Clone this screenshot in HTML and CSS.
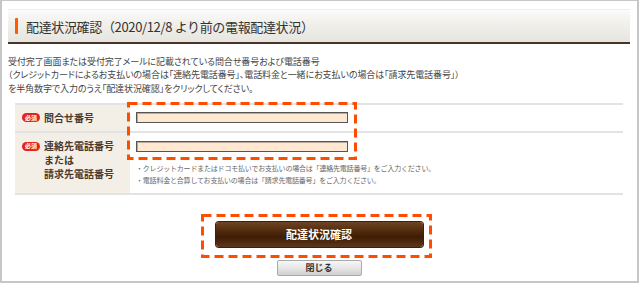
FILE: index.html
```html
<!DOCTYPE html>
<html lang="ja">
<head>
<meta charset="utf-8">
<link rel="stylesheet" href="styles.css">
</head>
<body>
<div class="frame">
  <div class="header">
    <span class="accent"></span>
    <h1 class="title">配達状況確認（2020/12/8 より前の電報配達状況）</h1>
  </div>
  <p class="intro">受付完了画面または受付完了メールに記載されている問合せ番号および電話番号<br>（クレジットカードによるお支払いの場合は「連絡先電話番号」、電話料金と一緒にお支払いの場合は「請求先電話番号」）<br>を半角数字で入力のうえ「配達状況確認」をクリックしてください。</p>
  <div class="table">
    <div class="row row-first">
      <div class="label"><span class="badge">必須</span><span class="label-text">問合せ番号</span></div>
      <div class="field"><span class="input"></span></div>
    </div>
    <div class="row row-second">
      <div class="label"><span class="badge">必須</span><span class="label-text">連絡先電話番号<br>または<br>請求先電話番号</span></div>
      <div class="field">
        <span class="input"></span>
        <p class="notes">・クレジットカードまたはドコモ払いでお支払いの場合は「連絡先電話番号」をご入力ください。<br>・電話料金と合算してお支払いの場合は「請求先電話番号」をご入力ください。</p>
      </div>
    </div>
  </div>
  <div class="actions">
    <button class="btn-main" type="button">配達状況確認</button>
    <button class="btn-close" type="button">閉じる</button>
  </div>
  <svg class="mark mark-fields" width="230" height="58" viewBox="0 0 230 58"><rect x="1.5" y="1.5" width="227" height="55" fill="none" stroke="#ff4d00" stroke-width="3" stroke-dasharray="9 5"/></svg>
  <svg class="mark mark-button" width="231" height="44" viewBox="0 0 231 44"><rect x="1.5" y="1.5" width="228" height="41" fill="none" stroke="#ff4d00" stroke-width="3" stroke-dasharray="9 5"/></svg>
</div>
</body>
</html>
```
FILE: styles.css
```css
* { box-sizing: border-box; }
html, body { margin: 0; padding: 0; background: #fff; }
body { font-family: "Noto Sans CJK JP", "Noto Sans", sans-serif; color: #333; }

.frame {
  position: relative;
  width: 639px;
  height: 283px;
  border: 2px solid #c6c6c6;
  border-top-width: 1px;
  padding: 8px 7px 0 6px;
  overflow: hidden;
}

.header {
  display: flex;
  align-items: center;
  height: 35px;
  padding: 0 0 0 7px;
  background: linear-gradient(#fbfbfa 0%, #f1f0ec 40%, #e7e5df 100%);
  border-top: 1px solid #eeeeec;
  border-bottom: 2px solid #4a3428;
}
.accent {
  width: 3px;
  height: 16px;
  background: #ff5a00;
  border-radius: 1px;
  margin-right: 8px;
}
.title {
  margin: 0;
  font-size: 13px;
  font-weight: normal;
  color: #333;
  letter-spacing: -0.35px;
  line-height: 1;
}

.intro {
  margin: 11px 0 0 0;
  font-size: 9px;
  line-height: 13.3px;
  color: #444;
  letter-spacing: -0.1px;
  font-feature-settings: "palt";
}

.table {
  margin: 8px 7px 0 7px;
  border-top: 2px solid #e3e3e3;
  border-bottom: 2px solid #e3e3e3;
}
.row { display: flex; }
.row-first { height: 28px; border-bottom: 2px solid #e3e3e3; }
.row-second { height: 60px; }

.label {
  width: 115px;
  background: #f4efe6;
  display: flex;
  align-items: flex-start;
  padding-left: 7px;
  font-size: 10px;
  font-weight: bold;
  color: #4a3a30;
}
.row-first .label { align-items: center; }
.row-second .label { padding-top: 6px; }
.label-text { line-height: 14px; }
.badge {
  flex: none;
  display: inline-flex;
  align-items: center;
  justify-content: center;
  width: 18px;
  height: 9px;
  margin-right: 4px;
  border-radius: 5px;
  background: #e2231a;
  color: #fff;
  font-size: 6px;
  line-height: 1;
}
.row-second .badge { margin-top: 3px; }

.field {
  flex: 1;
  padding-left: 6px;
  display: flex;
  flex-direction: column;
  justify-content: center;
}
.row-second .field { justify-content: flex-start; padding-top: 8px; }
.input {
  display: block;
  width: 212px;
  height: 11px;
  background: #ffe8d2;
  border: 1px solid #555;
  box-shadow: inset 1px 1px 0 #b9a99a;
}
.notes {
  margin: 10px 0 0 0;
  font-size: 7px;
  line-height: 12px;
  color: #666;
  letter-spacing: -0.2px;
}

.actions {
  display: flex;
  flex-direction: column;
  align-items: center;
  padding-top: 27px;
}
.btn-main {
  width: 207px;
  height: 25px;
  border: none;
  border-radius: 3px;
  background: linear-gradient(#6e4424 0%, #4a2508 45%, #3e1c04 60%, #5c371b 100%);
  box-shadow: 0 0 0 1px #3a2010;
  color: #fff;
  font-family: inherit;
  font-size: 11px;
  font-weight: bold;
  padding: 0;
}
.btn-close {
  margin-top: 13px;
  width: 85px;
  height: 16px;
  border: 1px solid #a9a9a9;
  border-radius: 2px;
  background: linear-gradient(#f7f7f7 0%, #e6e6e6 50%, #cfcfcf 100%);
  color: #333;
  font-family: inherit;
  font-size: 9px;
  font-weight: bold;
  padding: 0;
  line-height: 14px;
}

.mark { position: absolute; display: block; }
.mark-fields { left: 125px; top: 101px; }
.mark-button { left: 199px; top: 213px; }
```
